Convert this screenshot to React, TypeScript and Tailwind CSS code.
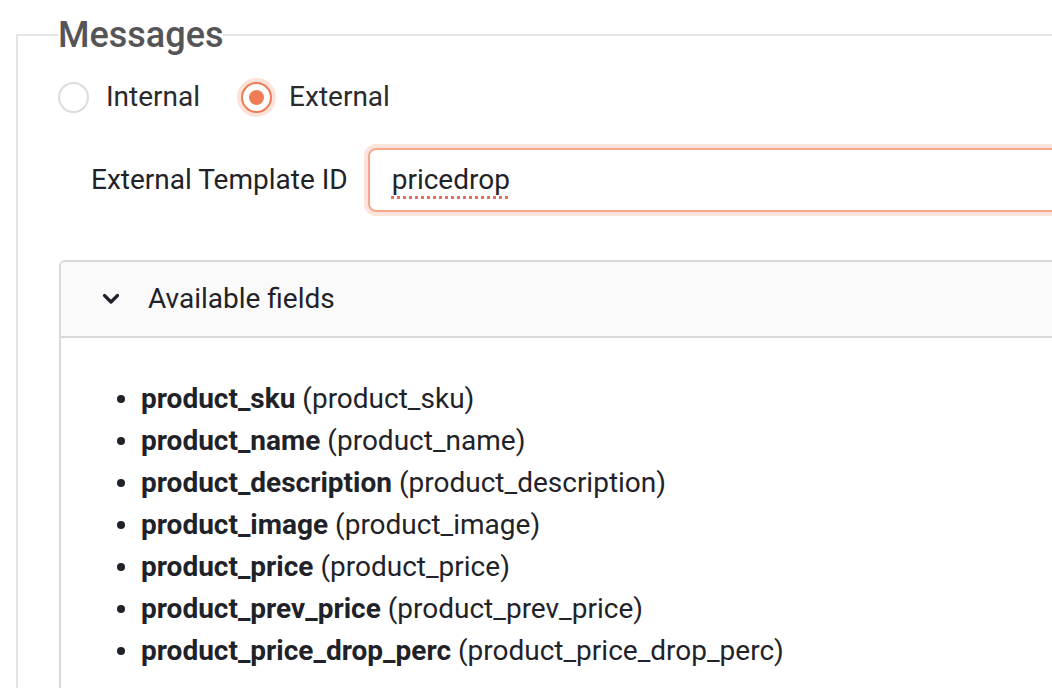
const fields = [
  'product_sku',
  'product_name',
  'product_description',
  'product_image',
  'product_price',
  'product_prev_price',
  'product_price_drop_perc',
];

function Radio({ checked }: { checked?: boolean }) {
  if (checked) {
    return (
      <span className="w-[31px] h-[31px] rounded-full border-2 border-[#ee7c56] bg-white flex items-center justify-center shadow-[0_0_0_4px_#fce2d8]">
        <span className="w-[15px] h-[15px] rounded-full bg-[#ee7c56]" />
      </span>
    );
  }
  return <span className="w-[31px] h-[31px] rounded-full border-2 border-[#dcdcdc] bg-white" />;
}

export default function App() {
  return (
    <div className="w-[1052px] h-[688px] overflow-hidden bg-white font-['Roboto',sans-serif]">
      <fieldset className="ml-[16px] mt-[15px] w-[1200px] border-2 border-[#e4e4ea] px-[40px] pb-[40px]">
        <legend className="text-[36px] leading-[40px] font-medium text-[#555557]">Messages</legend>

        {/* Message type */}
        <div className="mt-[26px] flex items-center h-[32px]">
          <Radio />
          <span className="ml-[17px] text-[28px] text-[#2a2a2c]">Internal</span>
          <span className="ml-[41px]">
            <Radio checked />
          </span>
          <span className="ml-[17px] text-[28px] text-[#2a2a2c]">External</span>
        </div>

        {/* Template id */}
        <div className="mt-[35px] ml-[33px] flex items-center">
          <label className="text-[28px] text-[#1f2329]">External Template ID</label>
          <div className="ml-[20px] w-[800px] h-[64px] rounded-[8px] border-2 border-[#f4a78a] shadow-[0_0_0_4px_#fde4db] flex items-center pl-[22px]">
            <span className="text-[28px] text-[#1f2329] underline decoration-dotted decoration-[#ee6a5c] decoration-[3px] underline-offset-[7px]">
              pricedrop
            </span>
          </div>
        </div>

        {/* Available fields */}
        <div className="mt-[48px] ml-px w-[1100px] border-2 border-[#d9d9d9] rounded-[6px] overflow-hidden">
          <div className="h-[76px] bg-[#fafafa] border-b-2 border-[#d9d9d9] flex items-center pl-[41px]">
            <svg width="18" height="12" viewBox="0 0 18 12" fill="none">
              <path d="M2.5 2.5 L9 9 L15.5 2.5" stroke="#1f2329" strokeWidth="3.2" strokeLinecap="round" strokeLinejoin="round" />
            </svg>
            <span className="ml-[28px] text-[28px] text-[#1f2329]">Available fields</span>
          </div>
          <ul className="pt-[40px] pb-[40px] pl-[56px]">
            {fields.map((f) => (
              <li key={f} className="flex items-center text-[28px] leading-[42px] text-[#1f2329]">
                <span className="w-[8px] h-[8px] rounded-full bg-[#1f2329]" />
                <span className="ml-[16px]">
                  <b className="font-bold">{f}</b> ({f})
                </span>
              </li>
            ))}
          </ul>
        </div>
      </fieldset>
    </div>
  );
}
